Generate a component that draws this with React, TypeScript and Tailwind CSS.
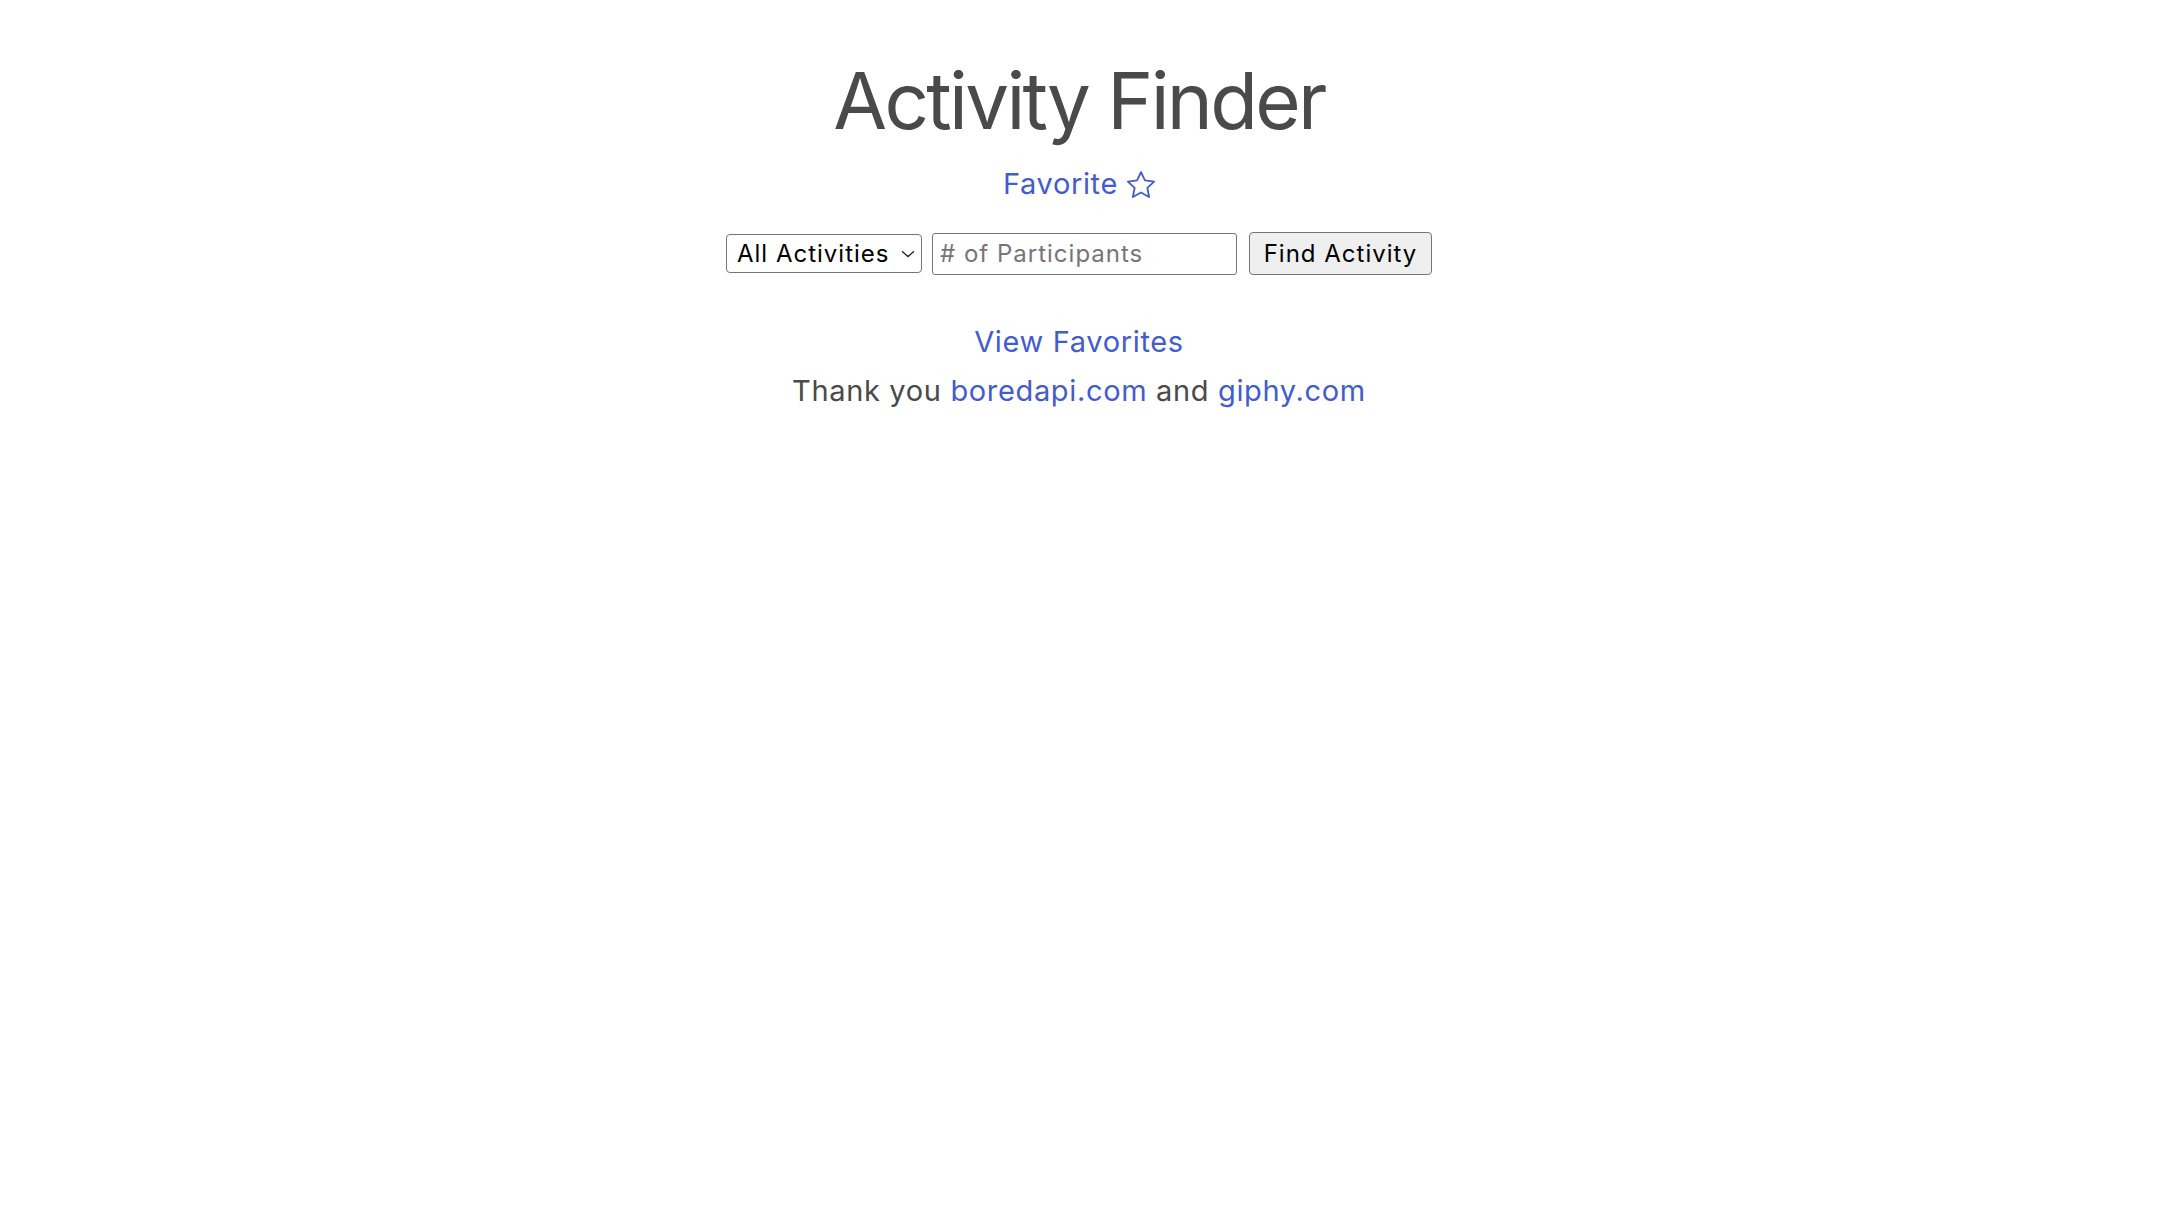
import React, { useState } from "react";

const font = { fontFamily: "Inter, 'Noto Sans', sans-serif" };

function StarOutline() {
  return (
    <svg width="28" height="27" viewBox="1 0.8 22 21" fill="none" stroke="#435ccd" strokeWidth="1.45" strokeLinejoin="round">
      <path d="M12 1.5l3.1 6.6 7.2.9-5.3 5 1.4 7.1L12 17.6 5.6 21.1 7 14l-5.3-5 7.2-.9z" />
    </svg>
  );
}

export default function App() {
  const [participants, setParticipants] = useState("");

  return (
    <main className="min-h-screen bg-white flex flex-col items-center pt-[62px] text-[#4a4a4a] tracking-[0.65px]" style={font}>
      <h1 className="text-[78px] leading-none font-normal tracking-[-2.7px]">Activity Finder</h1>

      <a href="#" className="mt-[26px] text-[29px] leading-[36px] text-[#435ccd] flex items-center gap-[9px]">
        Favorite
        <StarOutline />
      </a>

      <form className="mt-[30px] flex items-center h-[43px] tracking-[1px]" onSubmit={(e) => e.preventDefault()}>
        <div className="w-[196px] h-[39px] border border-[#767676] rounded-[4px] flex items-center justify-between pl-[10px] pr-[6px] text-[24px] text-black bg-white">
          <span>All Activities</span>
          <svg width="14" height="8" viewBox="0 0 14 8" fill="none" stroke="#222" strokeWidth="1.3">
            <path d="M1 1.2l6 5.4 6-5.4" />
          </svg>
        </div>
        <input
          value={participants}
          onChange={(e) => setParticipants(e.target.value)}
          placeholder="# of Participants"
          className="ml-[10px] w-[305px] h-[42px] border border-[#767676] rounded-[3px] px-[7px] text-[24px] text-black placeholder:text-[#757575] outline-none"
        />
        <button type="submit" className="ml-[12px] w-[183px] h-[43px] bg-[#efefef] border border-[#767676] rounded-[4px] text-[24px] text-black">
          Find Activity
        </button>
      </form>

      <a href="#" className="mt-[42px] text-[29px] leading-[49px] text-[#435ccd]">View Favorites</a>
      <p className="text-[29px] leading-[49px]">
        Thank you <a href="#" className="text-[#435ccd]">boredapi.com</a> and <a href="#" className="text-[#435ccd]">giphy.com</a>
      </p>
    </main>
  );
}
